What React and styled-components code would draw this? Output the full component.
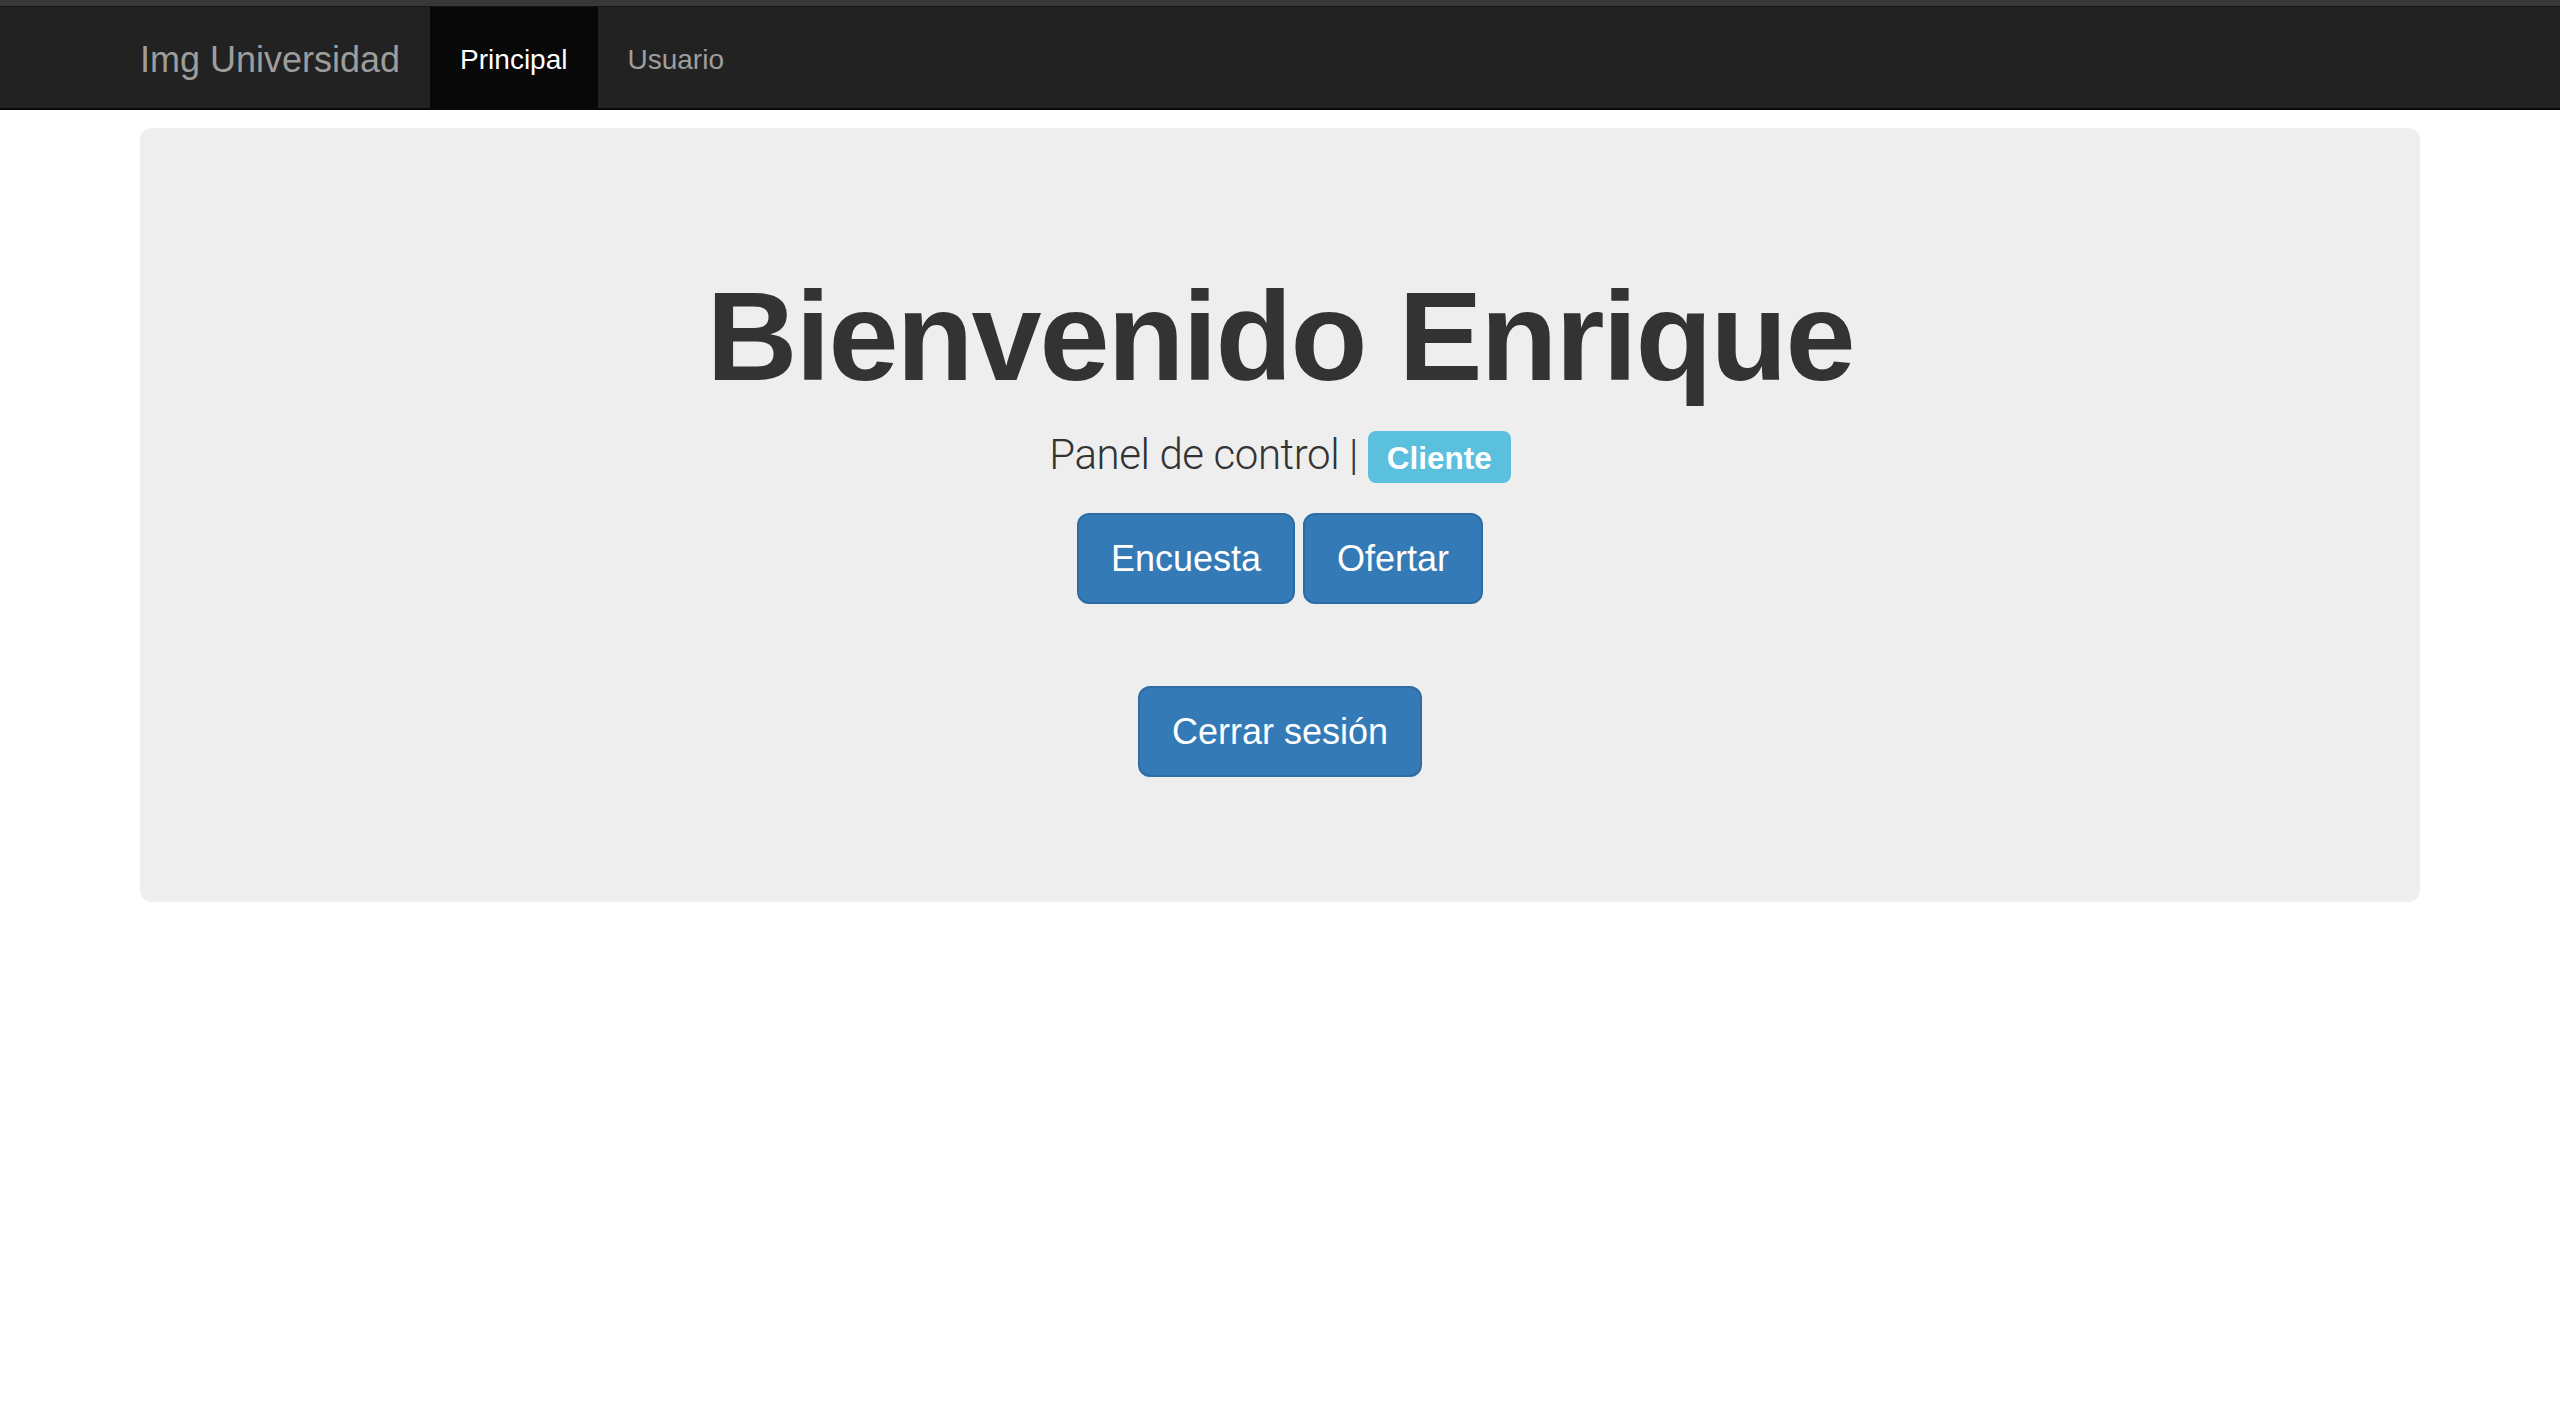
import styled, { createGlobalStyle } from 'styled-components';

const GlobalStyle = createGlobalStyle`
  html, body {
    margin: 0;
    padding: 0;
    background: #fff;
  }
  body {
    font-family: "Liberation Sans", Arial, sans-serif;
    color: #333;
  }
  * {
    box-sizing: border-box;
  }
`;

const TopStrip = styled.div`
  height: 7px;
  background: #38383a;
  border-bottom: 1px solid #141414;
`;

const NavBar = styled.nav`
  height: 103px;
  background-color: #222;
  border-bottom: 2px solid #080808;
`;

const Container = styled.div`
  width: 2340px;
  margin: 0 auto;
  padding: 0 30px;
`;

const NavInner = styled(Container)`
  display: flex;
  height: 100%;
`;

const Brand = styled.a`
  margin-left: -30px;
  padding: 33px 30px 28px;
  font-size: 36px;
  line-height: 40px;
  color: #9d9d9d;
  text-decoration: none;
`;

const NavLink = styled.a`
  padding: 33px 30px 28px;
  font-size: 28px;
  line-height: 40px;
  height: 101px;
  text-decoration: none;
  color: ${(p) => (p.$active ? '#fff' : '#9d9d9d')};
  background-color: ${(p) => (p.$active ? '#080808' : 'transparent')};
`;

const Jumbotron = styled.div`
  margin-top: 18px;
  padding: 96px 120px 96px;
  background-color: #eee;
  border-radius: 12px;
  text-align: center;
`;

const Title = styled.h1`
  margin: 44px 0 18px;
  font-size: 126px;
  font-weight: 700;
  line-height: 1.1;
  letter-spacing: -2px;
  color: #333;
`;

const Lead = styled.p`
  margin: 0 0 28px;
  font-family: Roboto, "Liberation Sans", sans-serif;
  font-size: 42px;
  font-weight: 300;
  line-height: 60px;
  letter-spacing: -0.4px;
`;

const Label = styled.span`
  display: inline-block;
  padding: 12px 19px 9px;
  font-family: "Liberation Sans", Arial, sans-serif;
  font-size: 31.5px;
  font-weight: 700;
  line-height: 1;
  letter-spacing: 0;
  color: #fff;
  background-color: #5bc0de;
  border-radius: 8px;
`;

const ButtonRow = styled.div`
  display: flex;
  justify-content: center;
  gap: 8px;
  margin-bottom: ${(p) => p.$space || 0}px;
`;

const Button = styled.a`
  display: inline-block;
  padding: 20px 32px;
  font-size: 36px;
  line-height: 47px;
  color: #fff;
  background-color: #337ab7;
  border: 2px solid #2e6da4;
  border-radius: 12px;
  text-decoration: none;
`;

export default function App() {
  return (
    <>
      <GlobalStyle />
      <TopStrip />
      <NavBar>
        <NavInner>
          <Brand href="#">Img Universidad</Brand>
          <NavLink href="#" $active>Principal</NavLink>
          <NavLink href="#">Usuario</NavLink>
        </NavInner>
      </NavBar>
      <Container>
        <Jumbotron>
          <Title>Bienvenido Enrique</Title>
          <Lead>
            Panel de control | <Label>Cliente</Label>
          </Lead>
          <ButtonRow $space={82}>
            <Button href="#">Encuesta</Button>
            <Button href="#">Ofertar</Button>
          </ButtonRow>
          <ButtonRow $space={29}>
            <Button href="#">Cerrar sesión</Button>
          </ButtonRow>
        </Jumbotron>
      </Container>
    </>
  );
}
